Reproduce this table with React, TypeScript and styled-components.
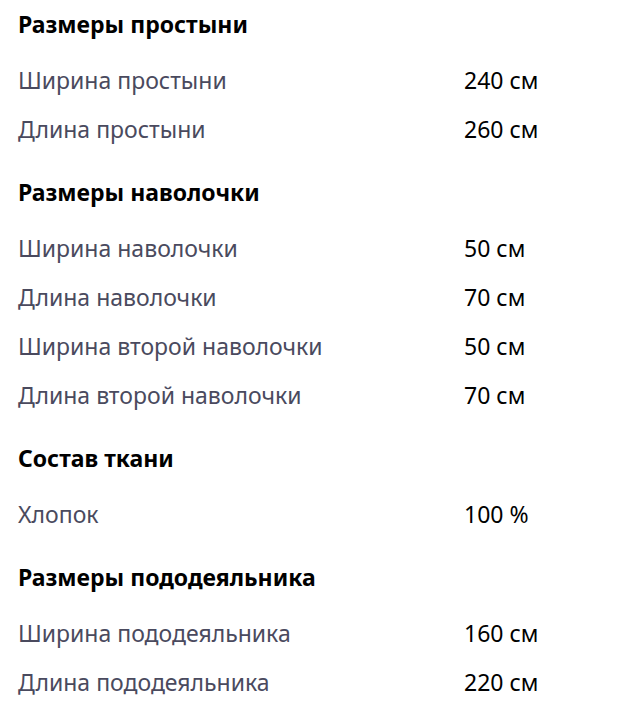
import React from "react";
import styled, { createGlobalStyle } from "styled-components";

const Global = createGlobalStyle`
  html, body { margin: 0; padding: 0; background: #fff; }
  body { font-family: "Noto Sans", "Open Sans", sans-serif; }
`;

const Page = styled.div`
  display: flex;
  flex-direction: column;
  gap: 15px;
  padding: 0 18px;
`;

const Section = styled.section`
  display: flex;
  flex-direction: column;
`;

const Heading = styled.h3`
  margin: 0 0 7px;
  height: 48px;
  display: flex;
  align-items: center;
  font-size: 23px;
  font-weight: 700;
  color: #000;
`;

const Row = styled.div`
  display: grid;
  grid-template-columns: 446px auto;
  height: 49px;
  align-items: center;
  font-size: 23px;
`;

const Label = styled.span`
  color: #4a4a5e;
`;

const Value = styled.span`
  color: #000;
`;

const data: { title: string; rows: [string, string][] }[] = [
  { title: "Размеры простыни", rows: [["Ширина простыни", "240 см"], ["Длина простыни", "260 см"]] },
  {
    title: "Размеры наволочки",
    rows: [
      ["Ширина наволочки", "50 см"],
      ["Длина наволочки", "70 см"],
      ["Ширина второй наволочки", "50 см"],
      ["Длина второй наволочки", "70 см"],
    ],
  },
  { title: "Состав ткани", rows: [["Хлопок", "100 %"]] },
  {
    title: "Размеры пододеяльника",
    rows: [["Ширина пододеяльника", "160 см"], ["Длина пододеяльника", "220 см"]],
  },
];

export default function App() {
  return (
    <>
      <Global />
      <Page>
        {data.map((s) => (
          <Section key={s.title}>
            <Heading>{s.title}</Heading>
            {s.rows.map(([l, v]) => (
              <Row key={l}>
                <Label>{l}</Label>
                <Value>{v}</Value>
              </Row>
            ))}
          </Section>
        ))}
      </Page>
    </>
  );
}
